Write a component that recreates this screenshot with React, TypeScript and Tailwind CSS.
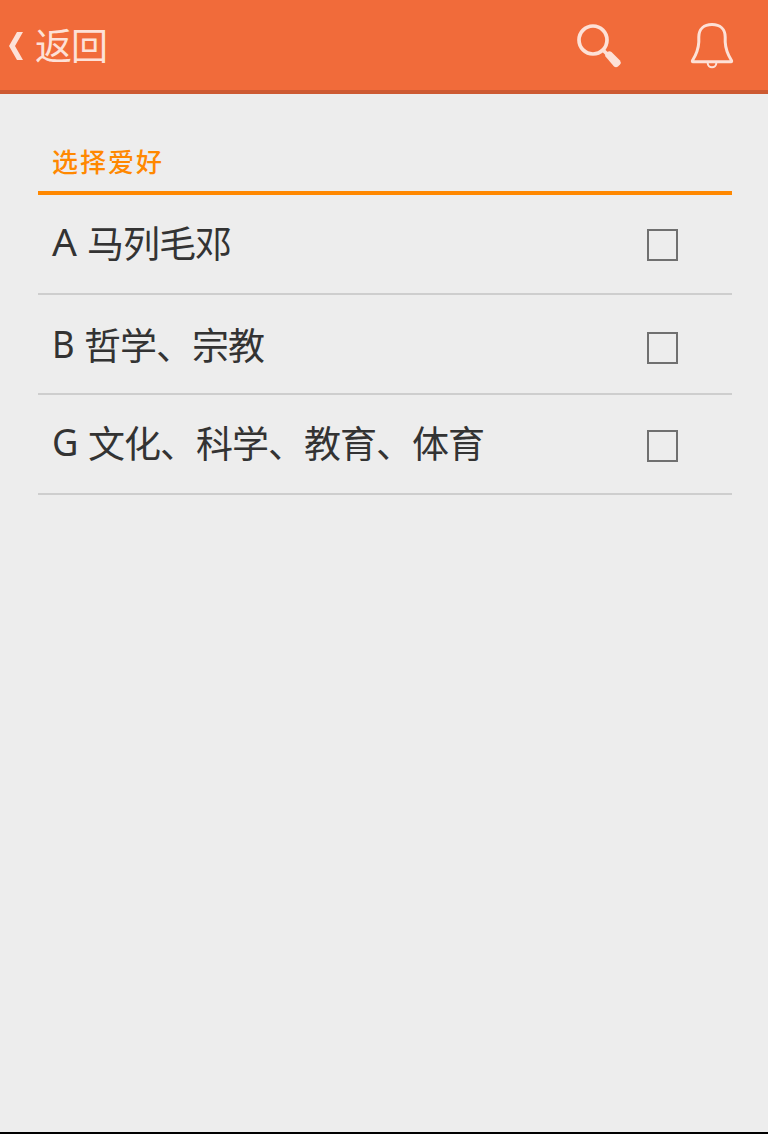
import { useState } from "react";

type Hobby = { code: string; label: string; codeStyle: string; pad: string; boxPad: string };

const hobbies: Hobby[] = [
  { code: "A", label: "马列毛邓", codeStyle: "w-[35px]", pad: "pt-[16px]", boxPad: "mt-[34px]" },
  { code: "B", label: "哲学、宗教", codeStyle: "w-[32px] origin-left scale-x-[0.89]", pad: "pt-[18px]", boxPad: "mt-[37px]" },
  { code: "G", label: "文化、科学、教育、体育", codeStyle: "w-[36px] origin-left scale-x-[0.93]", pad: "pt-[16px]", boxPad: "mt-[35px]" },
];

function SearchIcon() {
  return (
    <svg width="48" height="48" viewBox="0 0 48 48" fill="none" stroke="#fde1d7">
      <circle cx="18" cy="18" r="14" strokeWidth="3.7" />
      <path d="M27.500 27.500l6 6" strokeWidth="3.7" />
      <path
        d="M30.500 34.500Q29.500 33 30.700 31.700L32.500 29.800Q34.500 28.500 36.500 30L45 38.500Q46.500 40.500 45 42.500L43 44.500Q41 46 39 44.500Z"
        fill="#fde1d7"
        stroke="none"
      />
    </svg>
  );
}

function BellIcon() {
  return (
    <svg width="44" height="48" viewBox="0 0 44 48" fill="none" stroke="#fde1d7" strokeLinejoin="round">
      <path
        d="M2.500 38.500C6 33 8.500 26 8.800 20V15C8.800 7 14 2.500 22 2.500S35.200 7 35.200 15V20C35.500 26 38 33 41.500 38.500Q42 39.700 41 39.700H3Q2 39.700 2.500 38.500Z"
        strokeWidth="3"
      />
      <path d="M17.700 41C17.700 46.700 26.300 46.700 26.300 41" strokeWidth="2" />
    </svg>
  );
}

function HobbyRow({ hobby }: { hobby: Hobby }) {
  const [checked, setChecked] = useState(false);
  return (
    <li className="flex h-[100px] items-start border-b-2 border-[#cecece] pr-[54px] pl-[14px]">
      <div className={`flex flex-1 items-baseline leading-[60px] whitespace-nowrap text-[#333] ${hobby.pad}`}>
        <span className={`shrink-0 -translate-y-px font-['Noto_Sans',sans-serif] text-[39px] ${hobby.codeStyle}`}>
          {hobby.code}
        </span>
        <span className="translate-y-px font-['Noto_Sans_CJK_SC',sans-serif] text-[37px] tracking-[-1px]">{hobby.label}</span>
      </div>
      <button
        type="button"
        role="checkbox"
        aria-checked={checked}
        aria-label={hobby.label}
        onClick={() => setChecked(!checked)}
        className={`h-8 w-[31px] shrink-0 border-2 border-[#707070] ${checked ? "bg-[#ff8800]" : ""} ${hobby.boxPad}`}
      />
    </li>
  );
}

export default function App() {
  return (
    <div className="flex h-[1134px] w-[768px] flex-col border-b-2 border-black bg-[#ededed]">
      <header className="flex h-[94px] shrink-0 items-center justify-between border-b-4 border-[#cd5a32] bg-[#f16b3a] pt-[2px] pr-[34px] pl-[9px]">
        <button type="button" className="flex items-center text-[#fde1d7]">
          <svg width="14" height="28" viewBox="0 0 14 28" fill="currentColor">
            <path d="M8 0H14L6 14L14 28H8L0 14Z" />
          </svg>
          <span className="-mt-1 ml-3 font-['Noto_Sans_CJK_SC',sans-serif] text-[37px] leading-[60px] font-normal tracking-[-1px]">
            返回
          </span>
        </button>
        <div className="flex items-center gap-[67px]">
          <SearchIcon />
          <BellIcon />
        </div>
      </header>
      <main className="pr-9 pl-[38px]">
        <h1 className="flex h-[101px] items-end border-b-4 border-[#ff8800] pb-[10px] pl-[14px] font-['Noto_Sans_CJK_SC',sans-serif] text-[26px] leading-[40px] font-medium tracking-[2px] text-[#ff8800]">
          选择爱好
        </h1>
        <ul>
          {hobbies.map((hobby) => (
            <HobbyRow key={hobby.code} hobby={hobby} />
          ))}
        </ul>
      </main>
    </div>
  );
}
